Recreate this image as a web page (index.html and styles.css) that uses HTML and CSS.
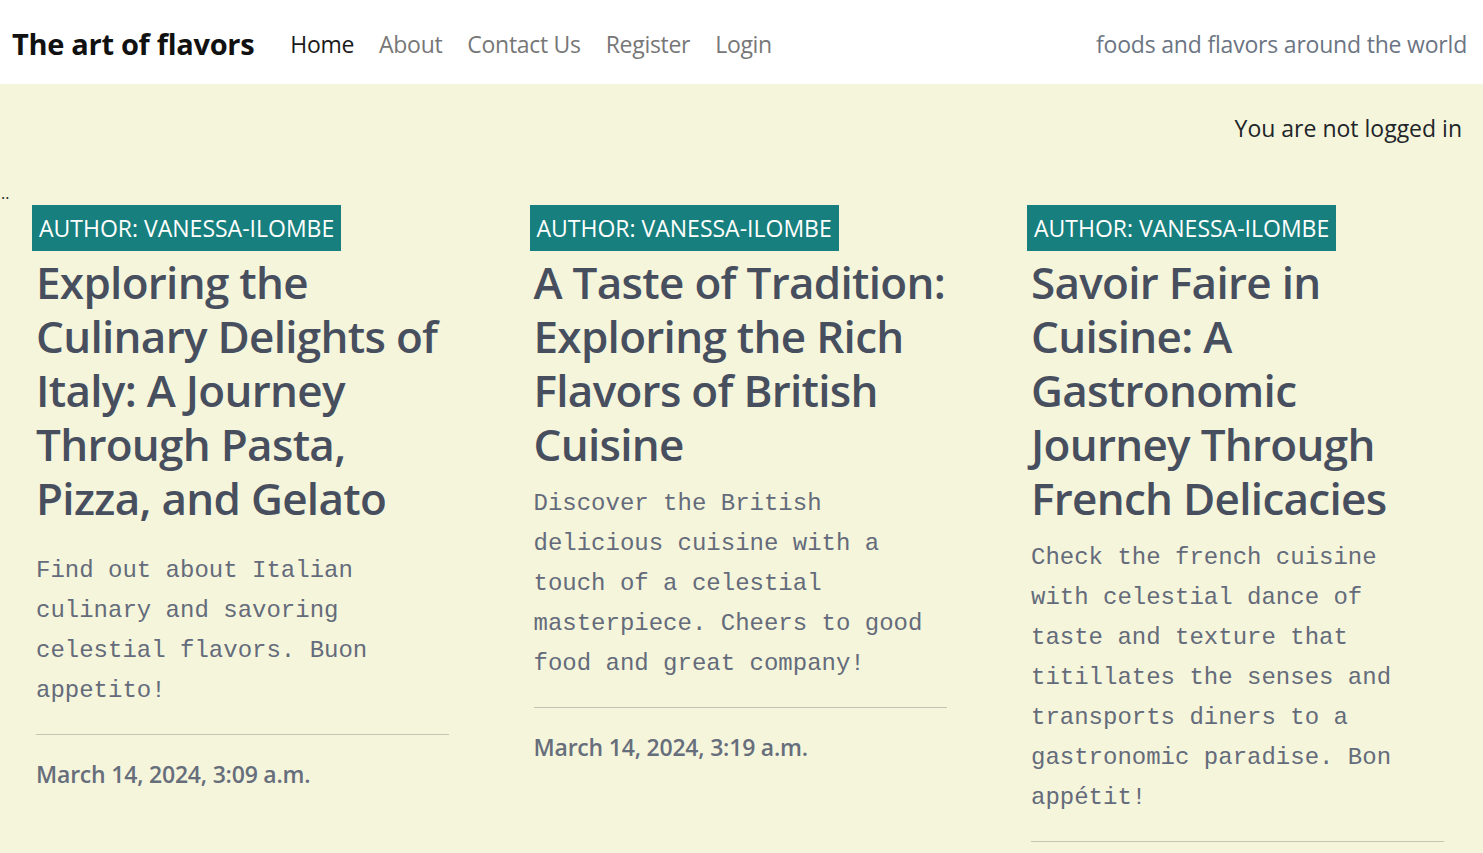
FILE: index.html
```html
<!DOCTYPE html>
<html lang="en">
<head>
<meta charset="utf-8">
<title>The art of flavors</title>
<link rel="stylesheet" href="styles.css">
</head>
<body>
<nav class="navbar">
  <a class="brand" href="#">The art of flavors</a>
  <ul class="nav-links">
    <li><a class="nav-link active" href="#">Home</a></li>
    <li><a class="nav-link" href="#">About</a></li>
    <li><a class="nav-link" href="#">Contact Us</a></li>
    <li><a class="nav-link" href="#">Register</a></li>
    <li><a class="nav-link" href="#">Login</a></li>
  </ul>
  <span class="tagline">foods and flavors around the world</span>
</nav>
<main class="page">
  <p class="login-status">You are not logged in</p>
  <div class="dots">..</div>
  <section class="posts">
    <article class="post">
      <span class="badge">Author: vanessa-ilombe</span>
      <h1 class="post-title">Exploring the Culinary Delights of Italy: A Journey Through Pasta, Pizza, and Gelato</h1>
      <p class="post-desc post-desc--spaced">Find out about Italian culinary and savoring celestial flavors. Buon appetito!</p>
      <hr class="post-rule">
      <p class="post-date">March 14, 2024, 3:09 a.m.</p>
    </article>
    <article class="post">
      <span class="badge">Author: vanessa-ilombe</span>
      <h1 class="post-title">A Taste of Tradition: Exploring the Rich Flavors of British Cuisine</h1>
      <p class="post-desc">Discover the British delicious cuisine with a touch of a celestial masterpiece. Cheers to good food and great company!</p>
      <hr class="post-rule">
      <p class="post-date">March 14, 2024, 3:19 a.m.</p>
    </article>
    <article class="post">
      <span class="badge">Author: vanessa-ilombe</span>
      <h1 class="post-title">Savoir Faire in Cuisine: A Gastronomic Journey Through French Delicacies</h1>
      <p class="post-desc">Check the french cuisine with celestial dance of taste and texture that titillates the senses and transports diners to a gastronomic paradise. Bon appétit!</p>
      <hr class="post-rule">
      <p class="post-date">March 14, 2024, 3:29 a.m.</p>
    </article>
  </section>
</main>
</body>
</html>
```
FILE: styles.css
```css
* { box-sizing: border-box; }
html, body { margin: 0; padding: 0; }
body {
  font-family: "Open Sans", "Noto Sans", sans-serif;
  background: #f5f5dc;
  color: #212529;
}
.navbar {
  display: flex;
  align-items: center;
  height: 84px;
  padding: 3px 16px 0 12px;
  background: #ffffff;
}
.brand {
  font-size: 29px;
  font-weight: 700;
  color: #111111;
  text-decoration: none;
  letter-spacing: -0.3px;
  margin-right: 36px;
}
.nav-links {
  display: flex;
  gap: 25px;
  list-style: none;
  margin: 0;
  padding: 0;
}
.nav-link {
  font-size: 23px;
  color: #777777;
  text-decoration: none;
  letter-spacing: -0.3px;
}
.nav-link.active { color: #1a1a1a; }
.tagline {
  margin-left: auto;
  font-size: 23px;
  color: #6c7583;
  letter-spacing: -0.2px;
}
.page {
  padding-bottom: 40px;
}
.login-status {
  margin: 26px 21px 0 0;
  text-align: right;
  font-size: 23px;
  line-height: 36px;
  color: #212529;
  letter-spacing: 0;
}
.dots {
  font-size: 16px;
  line-height: 20px;
  margin-top: 37px;
  padding-left: 1px;
}
.posts {
  display: grid;
  grid-template-columns: repeat(3, 413px);
  column-gap: 84.5px;
  padding-left: 36px;
  margin-top: 2px;
  align-items: start;
}
.post { min-width: 0; }
.badge {
  display: inline-block;
  margin-left: -4px;
  padding: 5px 7px;
  background: #17807e;
  color: #ffffff;
  font-size: 23px;
  line-height: 36px;
  text-transform: uppercase;
  letter-spacing: 0;
}
.post-title {
  margin: 4px 0 0;
  font-size: 44px;
  line-height: 54px;
  font-weight: 600;
  color: #474f5f;
  letter-spacing: -0.7px;
}
.post-desc {
  margin: 13px 0 0;
  font-family: "Courier New", "Nimbus Mono PS", "FreeMono", "Liberation Mono", monospace;
  font-size: 24px;
  line-height: 40px;
  color: #646b7a;
}
.post-desc--spaced { margin-top: 26px; }
.post-rule {
  margin: 23px 0 0;
  border: 0;
  border-top: 1px solid #c4c4b3;
}
.post-date {
  margin: 21px 0 0;
  font-size: 23px;
  line-height: 36px;
  font-weight: 600;
  color: #676e7b;
  letter-spacing: -0.2px;
}
```
